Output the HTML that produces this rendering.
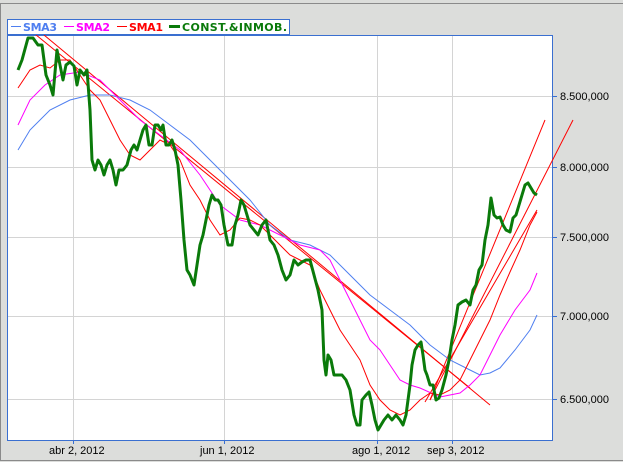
<!DOCTYPE html><html><head><style>
body{margin:0;width:623px;height:462px;background:#dcdddb;overflow:hidden;font-family:"Liberation Sans",sans-serif}
</style></head><body>
<svg width="623" height="462" style="position:absolute;left:0;top:0">
<rect x="0.5" y="3.5" width="630" height="457" fill="#dcdddb" stroke="#8a8a8a"/>
<rect x="7.5" y="35.5" width="545" height="405" fill="#fff" stroke="#3a6fd0"/>
<g stroke="#d4d4d4" stroke-width="1">
<line x1="73.5" y1="36" x2="73.5" y2="440"/><line x1="224.5" y1="36" x2="224.5" y2="440"/>
<line x1="377.5" y1="36" x2="377.5" y2="440"/><line x1="452.5" y1="36" x2="452.5" y2="440"/>
<line x1="8" y1="96.5" x2="552" y2="96.5"/><line x1="8" y1="167.5" x2="552" y2="167.5"/>
<line x1="8" y1="237.5" x2="552" y2="237.5"/><line x1="8" y1="316.5" x2="552" y2="316.5"/>
<line x1="8" y1="399.5" x2="552" y2="399.5"/>
</g>
<g stroke="#3a6fd0"><line x1="73.5" y1="440" x2="73.5" y2="444"/><line x1="224.5" y1="440" x2="224.5" y2="444"/><line x1="377.5" y1="440" x2="377.5" y2="444"/><line x1="452.5" y1="440" x2="452.5" y2="444"/>
<line x1="553" y1="96.5" x2="557" y2="96.5"/><line x1="553" y1="167.5" x2="557" y2="167.5"/><line x1="553" y1="237.5" x2="557" y2="237.5"/><line x1="553" y1="316.5" x2="557" y2="316.5"/><line x1="553" y1="399.5" x2="557" y2="399.5"/></g>
<g font-size="11" fill="#000">
<text x="49" y="454">abr 2, 2012</text><text x="200" y="454">jun 1, 2012</text><text x="352" y="454">ago 1, 2012</text><text x="427" y="454">sep 3, 2012</text>
<text x="560" y="100">8.500,000</text><text x="560" y="171">8.000,000</text><text x="560" y="241">7.500,000</text><text x="560" y="320">7.000,000</text><text x="560" y="403">6.500,000</text>
</g>
<g fill="none" stroke="#ff0000" stroke-width="1">
<line x1="44" y1="35" x2="490" y2="405"/><line x1="30" y1="30" x2="470" y2="388"/>
<line x1="430" y1="400" x2="545" y2="120"/><line x1="430" y1="400" x2="573" y2="120"/><line x1="425" y1="402" x2="537" y2="210"/>
</g>
<polyline fill="none" stroke="#4f7ff0" stroke-width="1" points="18,150 30,130 50,110 70,100 90,95 110,95 130,100 150,110 170,125 190,140 210,160 230,180 250,200 270,225 290,240 310,245 330,255 350,275 370,295 390,310 410,325 430,345 450,360 470,370 480,375 490,373 500,368 515,350 530,330 537,315"/>
<polyline fill="none" stroke="#ff00ff" stroke-width="1" points="18,125 30,100 45,85 60,75 80,72 100,80 120,100 140,120 160,135 180,150 200,175 220,205 240,220 260,225 280,235 300,245 320,250 330,260 340,280 350,300 360,320 370,340 380,350 390,365 400,380 410,385 420,388 440,397 460,393 470,385 480,375 490,355 500,335 515,310 530,290 537,273"/>
<polyline fill="none" stroke="#ff0000" stroke-width="1" points="18,88 30,70 40,65 50,68 60,60 70,60 80,75 90,90 100,100 110,120 120,140 130,155 140,160 150,150 160,140 170,145 180,160 190,185 200,200 210,220 220,235 230,230 240,218 250,220 260,225 270,235 280,245 290,255 300,260 310,265 320,290 330,310 340,330 350,345 360,360 370,385 380,400 390,410 400,415 410,410 420,400 430,393 440,395 450,390 460,380 470,360 480,340 490,320 500,295 510,272 520,250 530,225 537,212"/>
<polyline fill="none" stroke="#0a7a0a" stroke-width="3" stroke-linejoin="round" points="18,70 22,60 28,38 33,38 38,45 42,45 46,75 50,85 53,95 57,50 60,65 63,80 66,65 70,62 74,66 77,85 80,70 84,75 87,70 90,110 92,160 95,170 98,160 101,165 104,175 107,165 110,160 113,170 116,185 119,170 123,170 127,165 131,150 134,145 137,150 140,140 143,130 146,125 149,145 152,145 155,125 158,125 161,130 163,125 166,145 169,145 172,140 175,150 178,165 181,200 184,240 187,270 190,275 194,285 197,265 200,245 203,235 206,220 209,205 212,195 215,200 218,200 221,205 224,225 228,245 232,245 235,225 238,215 241,200 244,205 247,215 250,225 254,230 258,235 262,225 266,220 270,240 274,245 278,255 282,270 286,280 290,275 294,260 298,265 302,262 306,260 310,260 314,275 318,290 322,310 324,360 326,375 328,355 331,360 334,375 338,375 342,375 346,380 350,390 354,415 357,425 360,425 362,400 366,395 369,392 372,405 375,420 378,430 381,425 384,420 388,415 392,420 396,415 400,420 403,425 406,415 408,400 410,385 412,365 415,350 418,345 421,342 423,355 425,370 427,375 430,385 433,385 436,400 439,398 442,390 446,375 449,360 452,340 455,325 458,305 462,302 466,300 470,305 473,290 476,285 479,270 482,265 485,240 488,225 491,198 494,215 497,218 500,217 503,225 506,230 510,232 513,218 516,215 519,205 522,195 525,185 528,183 531,188 534,193 537,195"/>
<rect x="7.5" y="19.5" width="282" height="15" fill="#fff" stroke="#3a6fd0"/>
<g font-size="11" font-weight="bold" font-family="DejaVu Sans, sans-serif">
<line x1="11" y1="26.5" x2="21" y2="26.5" stroke="#4f7ff0"/><text x="23" y="31" fill="#4f7ff0" textLength="34">SMA3</text>
<line x1="64" y1="26.5" x2="74" y2="26.5" stroke="#ff00ff"/><text x="76" y="31" fill="#ff00ff" textLength="34">SMA2</text>
<line x1="117" y1="26.5" x2="127" y2="26.5" stroke="#ff0000"/><text x="129" y="31" fill="#ff0000" textLength="34">SMA1</text>
<line x1="169" y1="26.5" x2="180" y2="26.5" stroke="#0a7a0a" stroke-width="3"/><text x="182" y="31" fill="#0a7a0a" textLength="105">CONST.&amp;INMOB.</text>
</g>
</svg>
</body></html>
